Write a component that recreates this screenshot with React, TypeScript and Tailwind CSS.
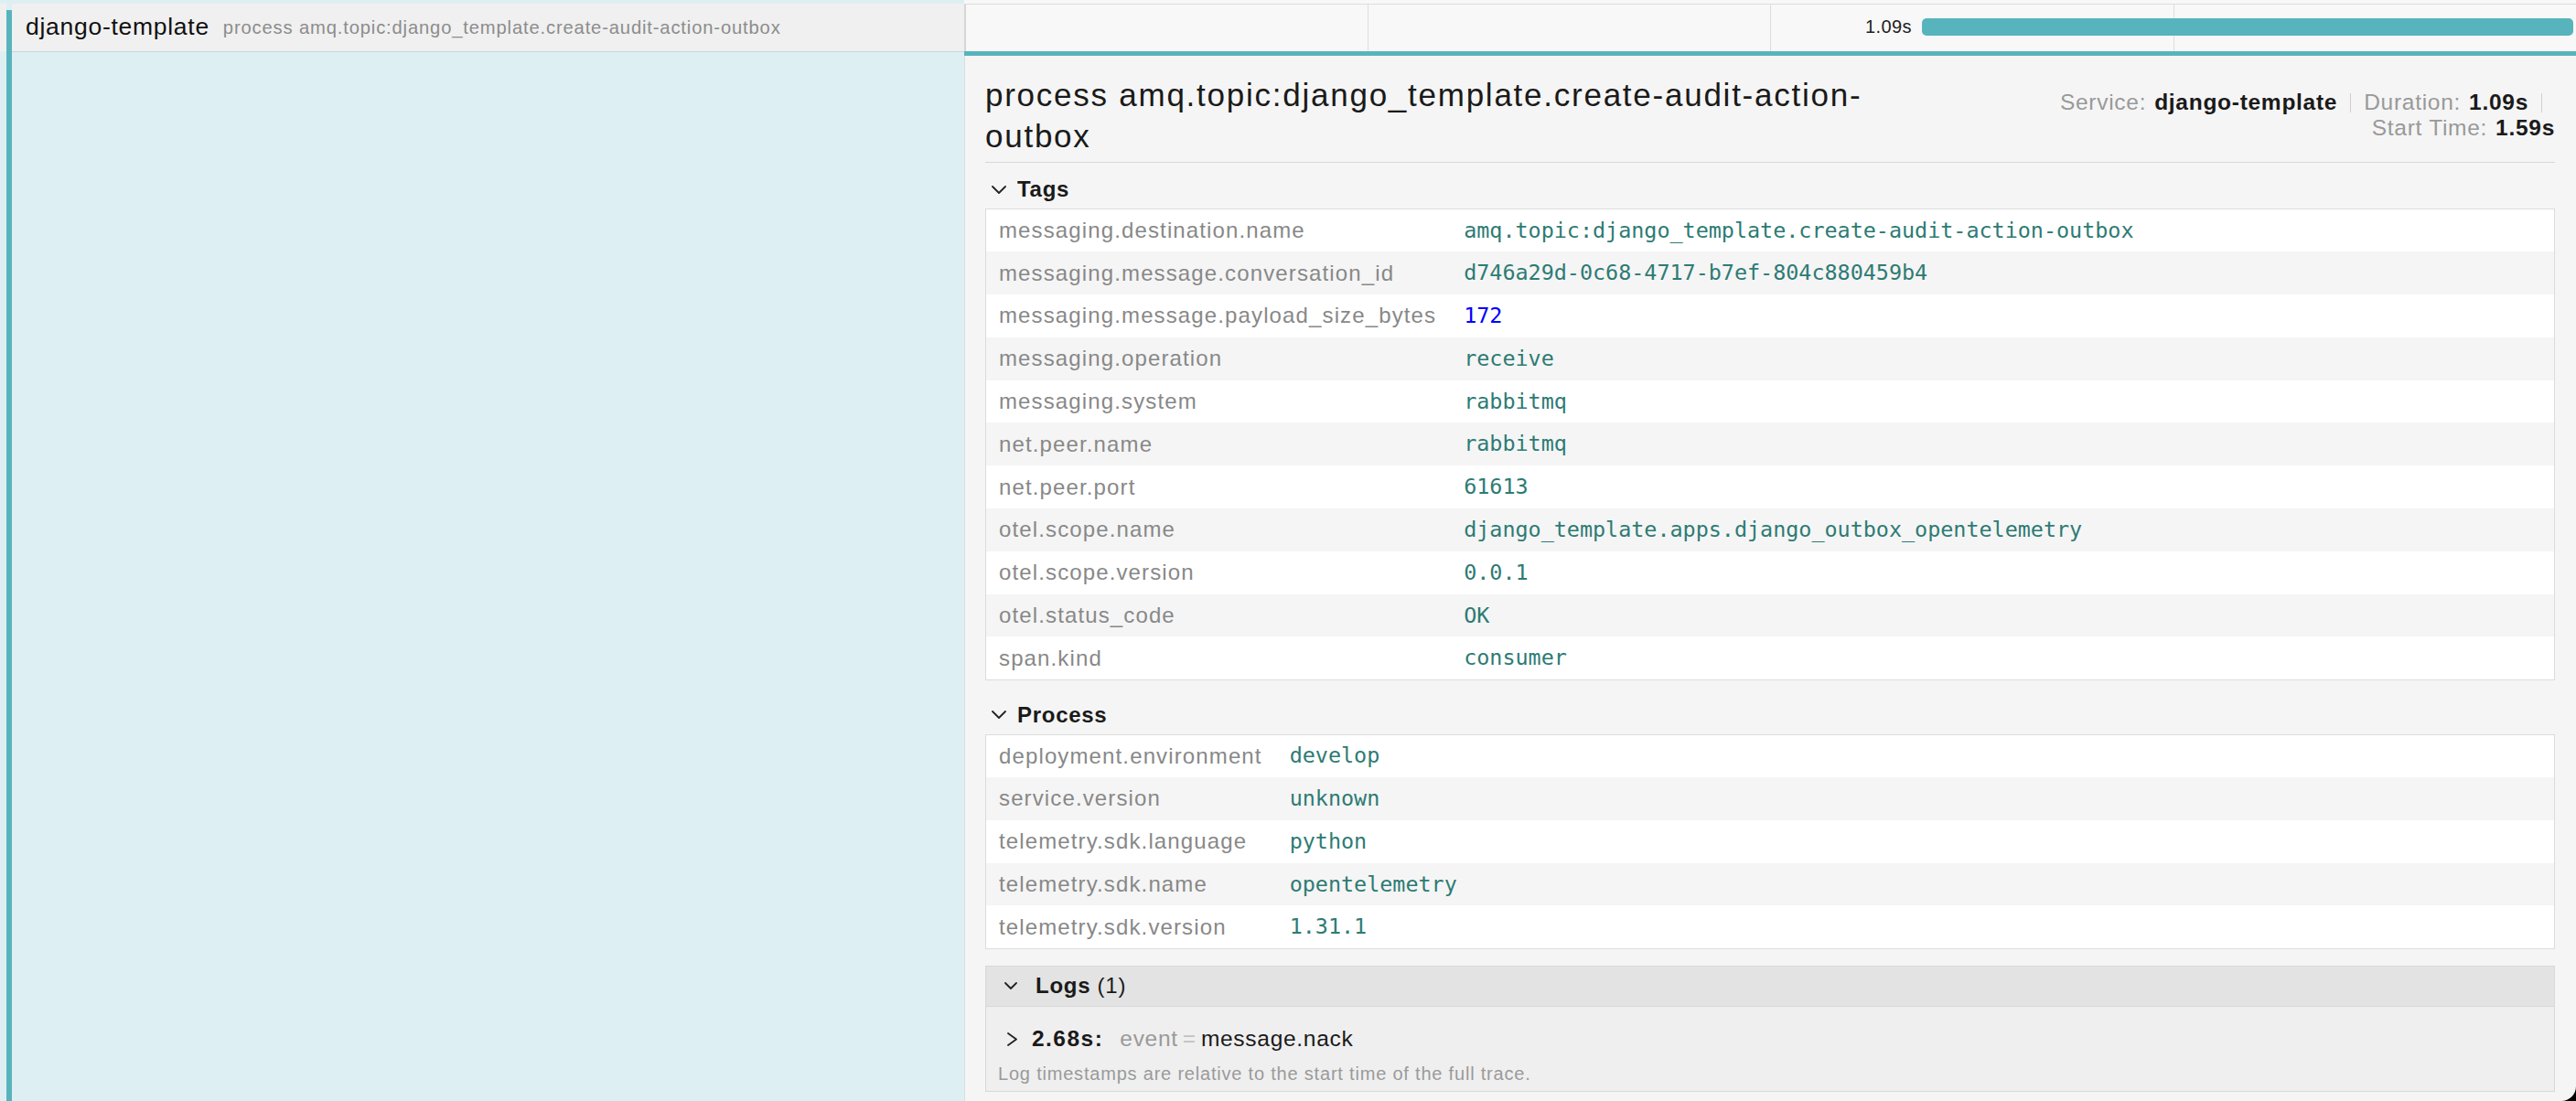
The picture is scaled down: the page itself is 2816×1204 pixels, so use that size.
import type { ReactNode } from "react";

const TEAL = "#57b4bd";

type Val = { text: string; kind?: "str" | "num" };

const tags: [string, Val][] = [
  ["messaging.destination.name", { text: "amq.topic:django_template.create-audit-action-outbox" }],
  ["messaging.message.conversation_id", { text: "d746a29d-0c68-4717-b7ef-804c880459b4" }],
  ["messaging.message.payload_size_bytes", { text: "172", kind: "num" }],
  ["messaging.operation", { text: "receive" }],
  ["messaging.system", { text: "rabbitmq" }],
  ["net.peer.name", { text: "rabbitmq" }],
  ["net.peer.port", { text: "61613" }],
  ["otel.scope.name", { text: "django_template.apps.django_outbox_opentelemetry" }],
  ["otel.scope.version", { text: "0.0.1" }],
  ["otel.status_code", { text: "OK" }],
  ["span.kind", { text: "consumer" }],
];

const processTags: [string, Val][] = [
  ["deployment.environment", { text: "develop" }],
  ["service.version", { text: "unknown" }],
  ["telemetry.sdk.language", { text: "python" }],
  ["telemetry.sdk.name", { text: "opentelemetry" }],
  ["telemetry.sdk.version", { text: "1.31.1" }],
];

// position of the span on the trace timeline, in percent of the row
const span = { startPct: 59.42, widthPct: 40.41, duration: "1.09s" };

function ChevronDown({ w = 16, h = 9 }: { w?: number; h?: number }) {
  return (
    <svg width={w} height={h} viewBox={`0 0 ${w} ${h}`} fill="none" stroke="#222" strokeWidth="1.8" strokeLinecap="round" strokeLinejoin="round">
      <polyline points={`1,1 ${w / 2},${h - 1} ${w - 1},1`} />
    </svg>
  );
}

function ChevronRight() {
  return (
    <svg width="11" height="15" viewBox="0 0 11 15" fill="none" stroke="#222" strokeWidth="1.8" strokeLinecap="round" strokeLinejoin="round">
      <polyline points="1,1 10,7.5 1,14" />
    </svg>
  );
}

function LeftPane() {
  return (
    <div className="flex w-[1054px] shrink-0">
      <div className="flex w-[7px] flex-col">
        <div className="h-[4px]" />
        <div className="h-[52px] bg-[#f0f0f0]" />
      </div>
      <div className="flex w-[6px] flex-col pt-[11px]">
        <div className="flex-1 bg-[#57b4bd]" />
      </div>
      <div className="flex flex-1 flex-col">
        <div className="h-[4px]" />
        <div className="flex h-[53px] items-center gap-[15px] overflow-hidden whitespace-nowrap border-b border-[#c6d7db] bg-[#f0f0f0] pl-[15px]">
          <span className="text-[26.5px] text-[#111]">django-template</span>
          <span className="text-[20.2px] tracking-[0.042em] text-[#8c8c8c]">
            process amq.topic:django_template.create-audit-action-outbox
          </span>
        </div>
      </div>
    </div>
  );
}

function TimelineRow() {
  return (
    <>
      <div className="h-[4px] bg-[#f8f8f8]" />
      <div className="relative grid h-[52px] grid-cols-4 border-t border-[#dddddd] bg-[#f8f8f8]">
        <div className="border-l-2 border-[#d6d6d6]" />
        <div className="border-l border-[#dddddd]" />
        <div className="border-l border-[#dddddd]" />
        <div className="border-l border-[#dddddd]" />
        <div
          className="absolute top-[15px] h-[19px] rounded-[5px]"
          style={{ left: `${span.startPct}%`, width: `${span.widthPct}%`, backgroundColor: TEAL }}
        />
        <span
          className="absolute top-[12px] pr-[11px] text-[20px] leading-[24px] tracking-[0.02em] text-[#222]"
          style={{ right: `${100 - span.startPct}%` }}
        >
          {span.duration}
        </span>
      </div>
      <div className="h-[5px] bg-[#57b4bd]" />
    </>
  );
}

function InfoItem({ label, value, last }: { label: string; value: string; last?: boolean }) {
  return (
    <li className="flex h-[28px] items-center whitespace-nowrap">
      <span className="text-[#999]">{label}:</span>
      <span className="ml-[9px] font-bold text-[#1a1a1a]">{value}</span>
      {!last && <span className="mx-[14px] h-[21px] w-px bg-[#cfcfcf]" />}
    </li>
  );
}

function KeyValueTable({ rows }: { rows: [string, Val][] }) {
  return (
    <table className="w-full border-collapse border border-[#dcdcdc] bg-white">
      <tbody>
        {rows.map(([key, val], i) => (
          <tr key={key} className={i % 2 === 1 ? "h-[46.8px] bg-[#f5f5f5]" : "h-[46.8px] bg-white"}>
            <td className="w-px whitespace-nowrap pl-[14px] pr-[16px] text-[24px] tracking-[0.047em] text-[#888]">{key}</td>
            <td
              className={
                "pl-[14px] font-['DejaVu_Sans_Mono',monospace] text-[23.4px] tracking-normal " +
                (val.kind === "num" ? "text-[#0000ff]" : "text-[#2d7b74]")
              }
            >
              {val.text}
            </td>
          </tr>
        ))}
      </tbody>
    </table>
  );
}

function Section({ title, className, children }: { title: string; className?: string; children: ReactNode }) {
  return (
    <section className={className}>
      <div className="flex h-[42px] items-center gap-[12px] pl-[7px]">
        <ChevronDown />
        <span className="text-[24px] font-bold text-[#1a1a1a]">{title}</span>
      </div>
      {children}
    </section>
  );
}

function Logs() {
  return (
    <div className="mt-[18px] border border-[#d8d8d8]">
      <div className="flex h-[44px] items-center gap-[20px] border-b border-[#d8d8d8] bg-[#e3e3e3] pl-[20px]">
        <ChevronDown w={14} h={8} />
        <span className="text-[24px] text-[#1a1a1a]">
          <span className="font-bold">Logs</span> (1)
        </span>
      </div>
      <div className="bg-[#efefef] pb-[7px] pt-[20px]">
        <div className="flex h-[32px] items-center pl-[23px] text-[24.5px]">
          <ChevronRight />
          <span className="ml-[16px] font-bold tracking-[0.06em] text-[#1a1a1a]">2.68s:</span>
          <span className="ml-[18px] text-[#999]">event</span>
          <span className="mx-[5px] text-[#c2c2c2]">=</span>
          <span className="text-[#1a1a1a]">message.nack</span>
        </div>
        <p className="mt-[9px] pl-[13px] text-[20px] leading-[24px] tracking-[0.04em] text-[#9a9a9a]">
          Log timestamps are relative to the start time of the full trace.
        </p>
      </div>
    </div>
  );
}

function SpanDetail() {
  return (
    <div className="flex-1 border-l border-[#dddddd] bg-[#f5f5f5] pl-[22px] pr-[23px]">
      <header className="flex items-center border-b border-[#d6d6d6] pb-[6px] pt-[20px]">
        <h2 className="w-[1010px] text-[35px] font-normal leading-[45px] tracking-[0.05em] text-[#1a1a1a]">
          process amq.topic:django_template.create-audit-action-outbox
        </h2>
        <ul className="ml-auto flex w-[620px] flex-wrap justify-end text-[24.5px]">
          <InfoItem label="Service" value="django-template" />
          <InfoItem label="Duration" value="1.09s" />
          <InfoItem label="Start Time" value="1.59s" last />
        </ul>
      </header>
      <Section title="Tags" className="mt-[8px]">
        <KeyValueTable rows={tags} />
      </Section>
      <Section title="Process" className="mt-[17px]">
        <KeyValueTable rows={processTags} />
      </Section>
      <Logs />
    </div>
  );
}

export default function App() {
  return (
    <div className="relative flex h-[1204px] w-[2816px] overflow-hidden bg-[#ddeff2] font-['Liberation_Sans',Arial,sans-serif] tracking-[0.045em] text-[#222]">
      <LeftPane />
      <div className="flex min-w-0 flex-1 flex-col">
        <TimelineRow />
        <SpanDetail />
      </div>
      {/* rounded screen corner */}
      <svg className="absolute bottom-0 right-0" width="16" height="16" viewBox="0 0 16 16">
        <path d="M16 0 V16 H0 A16 16 0 0 0 16 0 Z" fill="#000" />
      </svg>
    </div>
  );
}
